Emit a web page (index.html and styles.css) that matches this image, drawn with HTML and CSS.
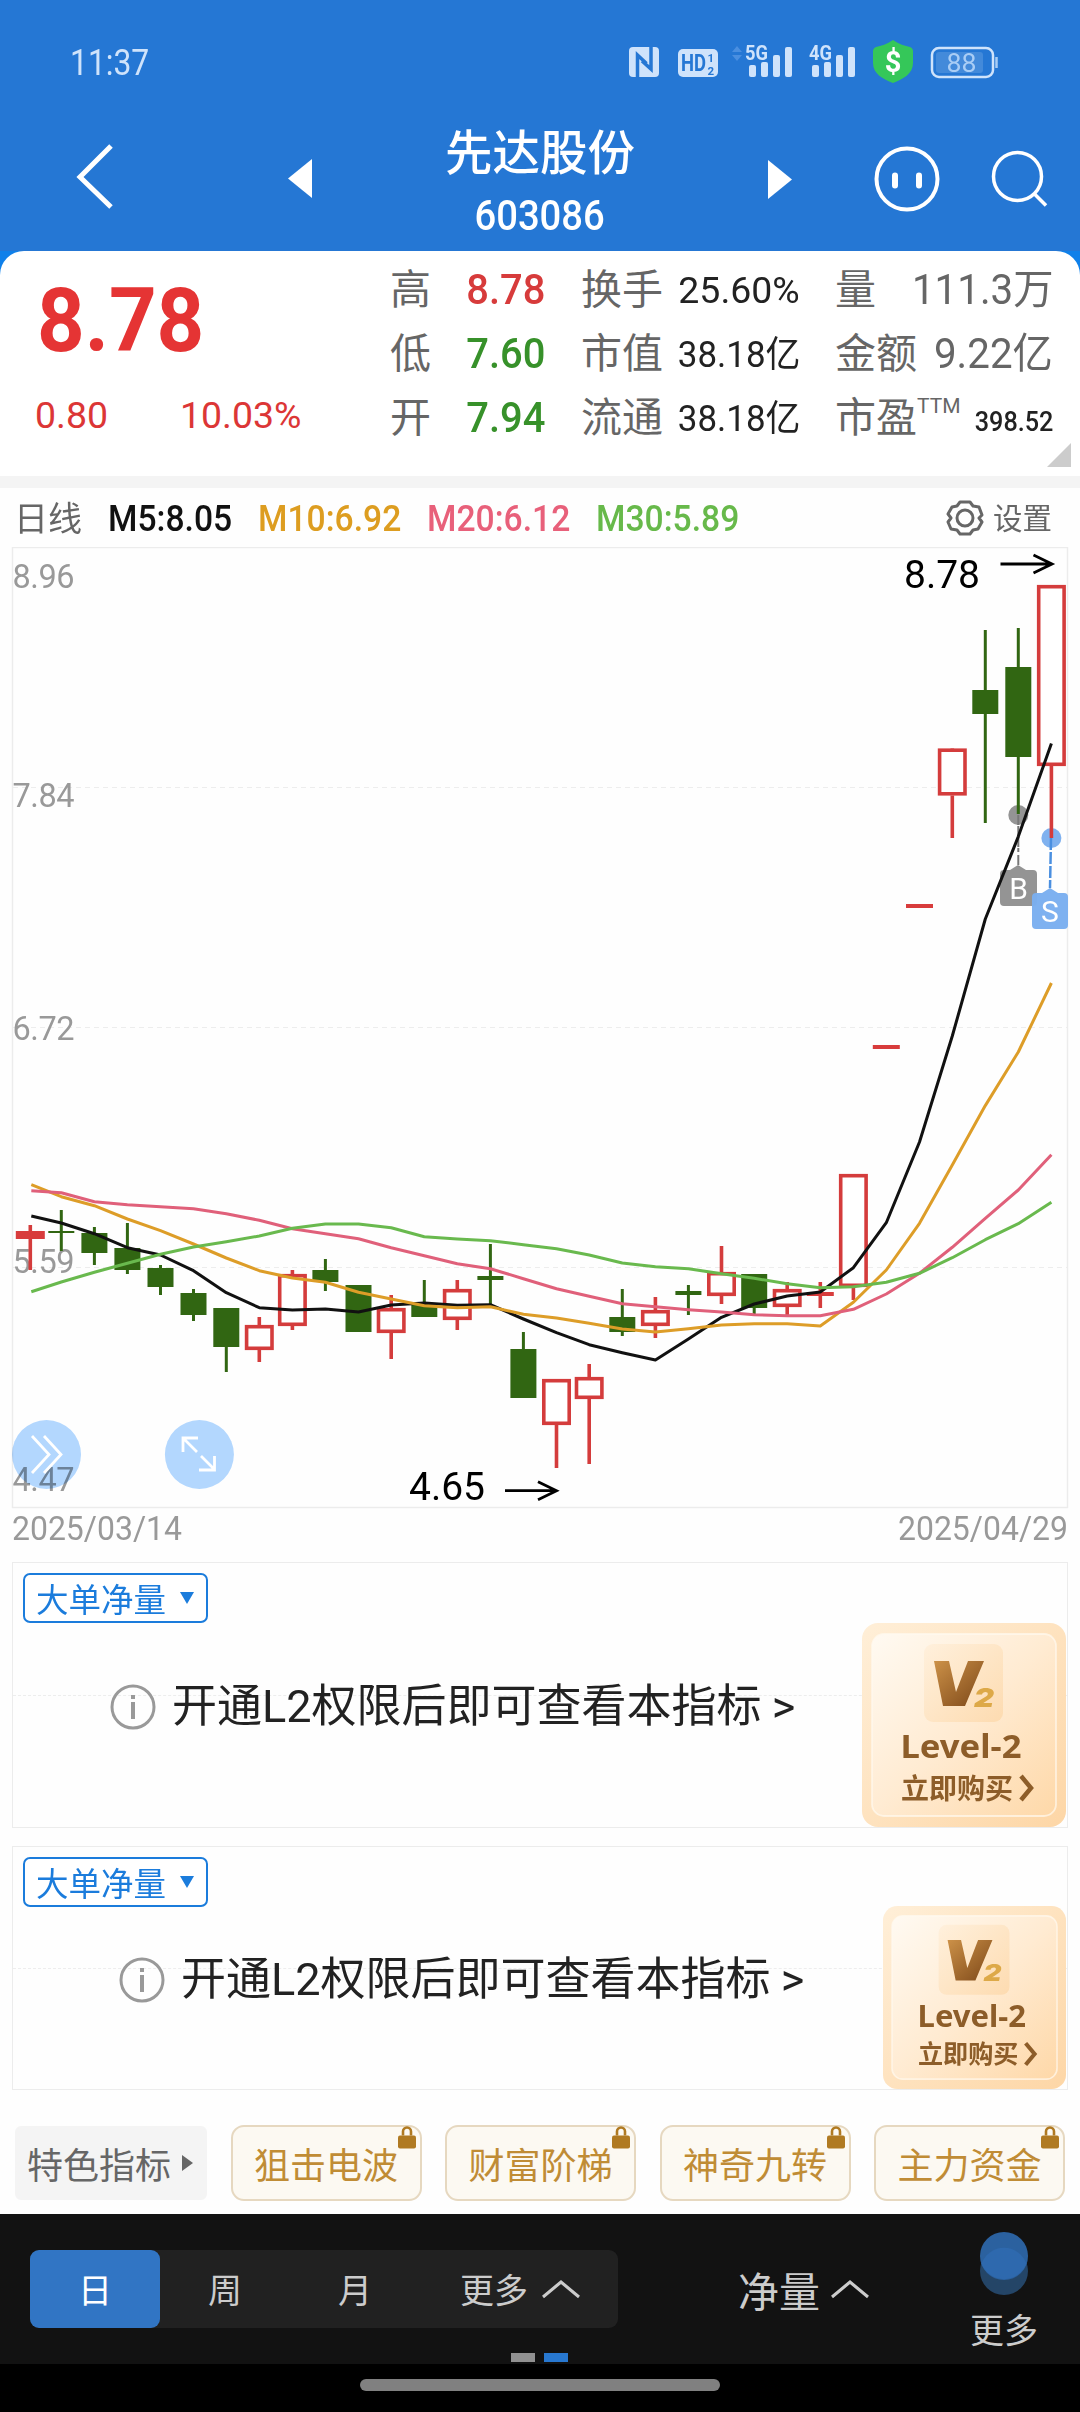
FILE: index.html
```html
<!DOCTYPE html>
<html lang="zh-CN">
<head>
<meta charset="utf-8">
<title>先达股份 603086</title>
<link rel="stylesheet" href="styles.css">
</head>
<body>
<div class="app">
  <header class="top">
    <div class="status">
      <span class="clock">11:37</span>
      <svg class="status-icons" width="376" height="50" viewBox="626 38 376 50">
        <rect x="629" y="47" width="30" height="30" rx="4" fill="#cfe3fb"/>
        <path d="M637.500 77V55l9 8.500M651 47v22l-9-8" fill="none" stroke="#2577d4" stroke-width="3.500"/>
        <rect x="678" y="49" width="40" height="28" rx="5" fill="#cfe3fb"/>
        <text x="681" y="71" class="hd" textLength="25" lengthAdjust="spacingAndGlyphs">HD</text>
        <text x="707.500" y="61.500" class="hd-s">1</text><text x="707.500" y="74.500" class="hd-s">2</text>
        <path d="M737 46l5 6h-10zM737 61l5-6h-10z" fill="#4a8fe0"/>
        <text x="745" y="60" class="net" textLength="23" lengthAdjust="spacingAndGlyphs">5G</text>
        <text x="809" y="60" class="net" textLength="23" lengthAdjust="spacingAndGlyphs">4G</text>
        <g fill="#cfe3fb">
          <rect x="749" y="65" width="7" height="12" rx="2"/><rect x="761" y="62" width="7" height="15" rx="2"/><rect x="773" y="55" width="7" height="22" rx="2"/><rect x="785" y="47" width="7" height="30" rx="2"/>
          <rect x="812" y="65" width="7" height="12" rx="2"/><rect x="824" y="62" width="7" height="15" rx="2"/><rect x="836" y="55" width="7" height="22" rx="2"/><rect x="848" y="47" width="7" height="30" rx="2"/>
        </g>
        <path d="M893 40c6 4 12 6 17 7 2 1 3 2 3 4v12c0 11-10 16-20 20-10-4-20-9-20-20V51c0-2 1-3 3-4 5-1 11-3 17-7z" fill="#35c759"/>
        <text x="893" y="72" class="dollar">$</text>
        <rect x="932" y="48" width="61" height="29" rx="7" fill="none" stroke="#cfe3fb" stroke-width="2.500"/>
        <rect x="936" y="52" width="47" height="21" rx="3" fill="#438ada"/>
        <path d="M996.500 57v11" stroke="#a9cdf5" stroke-width="2.500"/>
        <text x="946.500" y="72" class="batt" textLength="30" lengthAdjust="spacingAndGlyphs">88</text>
      </svg>
    </div>
    <nav class="titlebar">
      <svg class="ic" width="60" height="80" viewBox="65 137 60 80"><path d="M111 146L80 177l31 30" fill="none" stroke="#fff" stroke-width="5"/></svg>
      <svg class="ic" width="30" height="44" viewBox="285 157 30 44"><path d="M312 159v39l-24-19.500z" fill="#fff"/></svg>
      <div class="title"><h1>先达股份</h1><span class="code">603086</span></div>
      <svg class="ic" width="30" height="44" viewBox="765 157 30 44"><path d="M768 160v39l24-19.500z" fill="#fff"/></svg>
      <svg class="ic" width="180" height="80" viewBox="870 139 180 80" fill="none" stroke="#fff">
        <circle cx="907" cy="179" r="30.500" stroke-width="4"/>
        <path d="M895 175.500v10M919 175.500v10" stroke-width="6" stroke-linecap="round"/>
        <circle cx="1017.500" cy="176.500" r="24" stroke-width="3.500"/><path d="M1034 193.500l12 12" stroke-width="3.500"/>
      </svg>
    </nav>
  </header>

  <section class="quote-wrap"><div class="quote">
    <div class="price">
      <div class="last"><span>8.78</span></div>
      <div class="delta"><span>0.80</span><span>10.03%</span></div>
    </div>
    <dl class="stats s1">
      <dt>高</dt><dd class="up">8.78</dd>
      <dt>低</dt><dd class="down">7.60</dd>
      <dt>开</dt><dd class="down">7.94</dd>
    </dl>
    <dl class="stats s2">
      <dt>换手</dt><dd class="rate">25.60%</dd>
      <dt>市值</dt><dd>38.18亿</dd>
      <dt>流通</dt><dd>38.18亿</dd>
    </dl>
    <dl class="stats s3">
      <dt>量</dt><dd>111.3万</dd>
      <dt>金额</dt><dd>9.22亿</dd>
      <dt>市盈<sup>TTM</sup></dt><dd class="pe">398.52</dd>
    </dl>
    <i class="fold"></i>
  </div></section>

  <div class="ma-row">
    <span class="period">日线</span>
    <span class="ma m5">M5:8.05</span><span class="ma m10">M10:6.92</span><span class="ma m20">M20:6.12</span><span class="ma m30">M30:5.89</span>
    <svg class="gear" width="38" height="38" viewBox="-19 -19 38 38" fill="none" stroke="#666" stroke-width="3" stroke-linejoin="round">
      <path d="M-5-16H5L8-12 14-11 17-3 14 0 17 4 13 11 8 12 5 16H-5L-8 12-14 11-17 4-14 0-17-4-13-11-8-12z"/><circle r="8"/>
    </svg>
    <span class="set">设置</span>
  </div>

  <svg class="chart" width="1080" height="1015" viewBox="0 547 1080 1015">
    <rect x="12.500" y="547.500" width="1055" height="960" fill="none" stroke="#ececec" stroke-width="1.400"/>
    <path d="M13 787.500H1067M13 1027.500H1067M13 1267.500H1067" stroke="#ededed" stroke-width="1.200" stroke-dasharray="5 4"/>
    <g class="axis">
      <text x="12.500" y="588" textLength="62">8.96</text>
      <text x="12.500" y="806.500" textLength="62">7.84</text>
      <text x="12.500" y="1040" textLength="62">6.72</text>
      <text x="12.500" y="1273" textLength="62">5.59</text>
      <text x="12.500" y="1491" textLength="62">4.47</text>
      <text x="12" y="1540" textLength="170" lengthAdjust="spacingAndGlyphs">2025/03/14</text>
      <text x="898" y="1540" textLength="170" lengthAdjust="spacingAndGlyphs">2025/04/29</text>
    </g>
    <g class="marks">
      <circle cx="1018.300" cy="815" r="10" fill="#949494"/>
      <path d="M1018.300 815v37M1018.300 855v12" stroke="#777" stroke-width="2" stroke-dasharray="10 1"/>
      <circle cx="1051.400" cy="838" r="10" fill="#7fb1ef"/>
      <path d="M1051 838l-1 50" stroke="#4a8fe0" stroke-width="2.500" stroke-dasharray="12 2"/>
    </g>
    <g id="candles"></g>
    <g class="marks">
      <path d="M1004 870h6l8-5 8 5h7q4 0 4 4v28q0 4-4 4h-29q-4 0-4-4v-28q0-4 4-4z" fill="#8c8c8c" fill-opacity=".93"/>
      <path d="M1036 893h6l8-5 8 5h6q4 0 4 4v28q0 4-4 4h-28q-4 0-4-4v-28q0-4 4-4z" fill="#7aaef0" fill-opacity=".97"/>
      <text x="1018.500" y="899">B</text><text x="1050" y="922">S</text>
    </g>
    <g id="averages"></g>
    <g class="extreme">
      <text x="904" y="587.500" textLength="76">8.78</text>
      <path d="M1000.500 564H1052M1033.500 555l18.500 9-18.500 9"/>
      <text x="409" y="1500" textLength="76">4.65</text>
      <path d="M505 1490.700h51.500M538 1481.700l18.500 9-18.500 9"/>
    </g>
    <g class="overlay-buttons">
      <circle cx="46.500" cy="1454.500" r="34.500"/>
      <circle cx="199.400" cy="1454.500" r="34.500"/>
      <path d="M32 1436l17 18.500-17 18.500M44 1436l17 18.500-17 18.500"/>
      <path d="M198 1438h-15v14M183 1438l14 14M201 1456l14 14M199 1470h15.500v-14"/>
    </g>
  </svg>

  <section class="indicator first">
    <button class="pick">大单净量<i></i></button>
    <div class="notice"><svg width="46" height="46" viewBox="-23 -23 46 46"><circle r="21" fill="none" stroke="#999" stroke-width="3"/><path d="M0-5v17M0-12v4" stroke="#999" stroke-width="4"/></svg><span>开通L2权限后即可查看本指标 <b>&gt;</b></span></div>
    <svg class="card" viewBox="0 0 204 204">
      <defs>
        <linearGradient id="edge" x1="0" y1="0" x2="1" y2="1"><stop offset="0" stop-color="#ffefd8"/><stop offset="1" stop-color="#fdd6a6"/></linearGradient>
        <linearGradient id="face" x1="0" y1="0" x2="1" y2="1"><stop offset="0" stop-color="#fffaf2"/><stop offset=".5" stop-color="#ffebd2"/><stop offset="1" stop-color="#fed8a8"/></linearGradient>
        <linearGradient id="tile" x1="0" y1="0" x2="1" y2="1"><stop offset="0" stop-color="#fff0dc"/><stop offset="1" stop-color="#fddbb0"/></linearGradient>
        <linearGradient id="vee" x1="0" y1="0" x2="1" y2="1"><stop offset="0" stop-color="#cc9148"/><stop offset="1" stop-color="#7c4718"/></linearGradient>
      </defs>
      <g id="level2">
        <rect width="204" height="204" rx="16" fill="url(#edge)"/>
        <rect x="10" y="11" width="184" height="182" rx="12" fill="url(#face)" stroke="#fffaf0" stroke-opacity=".7" stroke-width="1.800"/>
        <rect x="62" y="21" width="79" height="78" rx="9" fill="url(#tile)"/>
        <path d="M72 38h15l7 31 12-31h16L103 83H81z" fill="url(#vee)"/>
        <text x="112" y="83.500" class="two" textLength="20" lengthAdjust="spacingAndGlyphs">2</text>
        <text x="38.500" y="135" class="lv" textLength="121" lengthAdjust="spacingAndGlyphs">Level-2</text>
        <text x="39" y="175.500" class="buy">立即购买</text>
        <path d="M159 153l10 12-10 12" fill="none" stroke="#8d5d29" stroke-width="4.500"/>
      </g>
    </svg>
  </section>

  <section class="indicator second">
    <button class="pick">大单净量<i></i></button>
    <div class="notice"><svg width="46" height="46" viewBox="-23 -23 46 46"><circle r="21" fill="none" stroke="#999" stroke-width="3"/><path d="M0-5v17M0-12v4" stroke="#999" stroke-width="4"/></svg><span>开通L2权限后即可查看本指标 <b>&gt;</b></span></div>
    <svg class="card" viewBox="0 0 204 204"><use href="#level2"/></svg>
  </section>

  <div class="tags">
    <span class="tag plain">特色指标<i></i></span>
    <span class="tag">狙击电波<svg class="lock" viewBox="0 0 18 23"><path d="M5 10V6a4 4 0 018 0v4" fill="none" stroke="#b07a22" stroke-width="2.600"/><rect y="10" width="18" height="13" rx="2" fill="#b07a22"/></svg></span>
    <span class="tag">财富阶梯<svg class="lock" viewBox="0 0 18 23"><path d="M5 10V6a4 4 0 018 0v4" fill="none" stroke="#b07a22" stroke-width="2.600"/><rect y="10" width="18" height="13" rx="2" fill="#b07a22"/></svg></span>
    <span class="tag">神奇九转<svg class="lock" viewBox="0 0 18 23"><path d="M5 10V6a4 4 0 018 0v4" fill="none" stroke="#b07a22" stroke-width="2.600"/><rect y="10" width="18" height="13" rx="2" fill="#b07a22"/></svg></span>
    <span class="tag">主力资金<svg class="lock" viewBox="0 0 18 23"><path d="M5 10V6a4 4 0 018 0v4" fill="none" stroke="#b07a22" stroke-width="2.600"/><rect y="10" width="18" height="13" rx="2" fill="#b07a22"/></svg></span>
  </div>

  <footer class="toolbar">
    <div class="periods">
      <span class="on">日</span><span>周</span><span>月</span>
      <span class="more">更多<svg width="40" height="20" viewBox="0 0 40 20"><path d="M2 18L20 3l18 15" fill="none" stroke="#ccc" stroke-width="3"/></svg></span>
    </div>
    <span class="net-vol">净量<svg width="40" height="20" viewBox="0 0 40 20"><path d="M2 18L20 3l18 15" fill="none" stroke="#ccc" stroke-width="3"/></svg></span>
    <div class="extra">
      <svg width="50" height="64" viewBox="0 0 50 64"><circle cx="25" cy="39" r="24" fill="#244567"/><circle cx="25" cy="24" r="24" fill="#2b619f"/><path d="M2.500 31.500a24 24 0 0145 0 24 24 0 01-45 0z" fill="#2e69ae"/></svg>
      <span>更多</span>
    </div>
    <div class="pager"><i></i><i class="cur"></i></div>
  </footer>
  <div class="home"><i></i></div>
</div>
<script src="chart.js"></script>
</body>
</html>
```
FILE: styles.css
```css
* { box-sizing: border-box; margin: 0; padding: 0; }
body { width: 1080px; background: #fefefe; font-family: Roboto, "Noto Sans CJK SC", sans-serif; color: #222; }
.app { width: 1080px; height: 2412px; display: flex; flex-direction: column; overflow: hidden; }
.app > * { flex: none; }
svg { display: block; }

.top { height: 251px; background: #2577d4; color: #fff; }
.status { height: 98px; display: flex; justify-content: space-between; align-items: flex-start; padding: 38px 78px 0 70px; }
.clock { font-size: 37px; line-height: 50px; color: #cfe3fb; transform: scaleX(.86); transform-origin: left; }
.status-icons text { font-family: Roboto, sans-serif; fill: #cfe3fb; }
.status-icons .hd { font-size: 23px; font-weight: 700; fill: #2577d4; }
.status-icons .hd-s { font-size: 11.500px; font-weight: 700; fill: #2577d4; }
.status-icons .net { font-size: 21px; font-weight: 700; }
.status-icons .dollar { font-size: 29px; font-weight: 700; fill: #fff; text-anchor: middle; }
.status-icons .batt { font-size: 26px; fill: #a9cdf5; }

.titlebar { display: flex; height: 153px; padding-left: 65px; }
.ic { margin-top: 39px; }
.ic:nth-of-type(1) { margin-right: 160px; }
.ic:nth-of-type(2), .ic:nth-of-type(3) { margin-top: 59px; }
.ic:nth-of-type(4) { margin-left: 75px; margin-top: 41px; }
.title { width: 450px; display: flex; flex-direction: column; align-items: center; }
.title h1 { font-size: 47.500px; font-weight: 500; line-height: 54px; margin-top: 25px; font-family: "Noto Sans CJK SC", sans-serif; }
.code { font-size: 42px; line-height: 50px; margin-top: 14px; font-weight: 500; transform: scaleX(.91); }

.quote-wrap { background: #0f80ea; height: 225px; }
.quote { position: relative; height: 225px; background: #fff; border-radius: 24px 24px 0 0; display: flex; padding-top: 7px; }
.price { width: 390px; padding-left: 37px; color: #e53434; }
.last { font-size: 89px; font-weight: 700; line-height: 110px; margin-top: 8px; }
.last span { display: inline-block; transform: scaleX(.935); transform-origin: left; }
.delta { display: flex; font-size: 36px; line-height: 50px; margin-top: 15px; margin-left: -2px; color: #dc3636; }
.delta span { width: 145px; transform: scaleX(1.04); transform-origin: left; }
.stats { display: grid; grid-template-rows: repeat(3, 64px); line-height: 64px; align-items: center; }
.stats dt { font-size: 41px; color: #666; white-space: nowrap; }
.stats dd { justify-self: end; transform-origin: right; white-space: nowrap; }
.s1 { width: 156px; grid-template-columns: 60px minmax(0, 1fr); }
.s1 dd { font-size: 42px; font-weight: 500; transform: scaleX(.95); padding-right: 1px; }
.up { color: #d73b3b; }
.down { color: #37912a; }
.s2 { width: 219px; margin-left: 35px; grid-template-columns: 88px minmax(0, 1fr); }
.s2 dd { font-size: 36px; padding-top: 2px; transform: scaleX(.97); }
.s2 .rate { transform: scaleX(1.04); }
.s3 { width: 218px; margin-left: 35px; grid-template-columns: 88px minmax(0, 1fr); }
.s3 dd { font-size: 42px; color: #666; transform: scaleX(.96); }
.s3 .pe { font-size: 28px; color: #222; font-weight: 500; padding-top: 8px; transform: scaleX(.9); }
.s3 sup { font-size: 21px; line-height: 0; vertical-align: 19px; }
.fold { position: absolute; right: 9px; bottom: 9px; width: 24px; height: 24px; background: #ccc; clip-path: polygon(100% 0, 100% 100%, 0 100%); }

.ma-row { height: 71px; border-top: 12px solid #f4f4f4; display: grid; grid-template-columns: 94px 150px 169px 169px 350px 48px 1fr; align-items: center; padding: 3px 0 0 14px; font-size: 34px; line-height: 56px; }
.period { color: #666; }
.ma { font-weight: 500; font-size: 36px; transform: scaleX(.935); transform-origin: left; justify-self: start; }
.m5 { color: #111; }
.m10 { color: #dd9d20; }
.m20 { color: #e8607a; }
.m30 { color: #67b94a; }
.gear { margin-top: -2px; }
.set { font-size: 29.500px; color: #666; margin-left: -1px; }

.chart text { font-family: Roboto, sans-serif; }
.axis text { font-size: 32.500px; fill: #999; }
.extreme text { font-size: 39px; fill: #000; }
.extreme path { fill: none; stroke: #000; stroke-width: 2.800; }
.marks text { font-size: 30px; fill: #fff; text-anchor: middle; }
#averages polyline { fill: none; stroke-width: 3; stroke-linejoin: round; }
.overlay-buttons circle { fill: #b4d8ff; mix-blend-mode: multiply; }
.overlay-buttons path { fill: none; stroke: #fff; stroke-width: 2.800; }

.indicator { position: relative; margin: 0 12px; border: 1.500px solid #ececec; padding: 10px 0 0 10px; }
.first { height: 266px; }
.second { height: 244px; margin-top: 18px; }
.indicator::before { content: ""; position: absolute; left: 0; right: 0; top: 50%; border-top: 1px dashed #ededed; }
.pick { position: relative; display: flex; align-items: center; width: 185px; height: 50px; border: 2px solid #1b7cdc; border-radius: 7px; background: #fff; color: #1b7cdc; padding-left: 11px; font: 32.500px/44px "Noto Sans CJK SC", sans-serif; }
.pick i { margin-left: 14px; border: 7.500px solid transparent; border-top: 12px solid #1b7cdc; border-bottom: 0; }
.notice { position: relative; display: flex; align-items: center; gap: 16px; width: 720px; font-size: 45px; line-height: 60px; white-space: nowrap; }
.notice b { font-weight: 400; margin-left: -1px; }
.first .notice { margin: 54px 0 0 87px; }
.second .notice { margin: 43px 0 0 96px; }
.card { position: absolute; right: 0; }
.first .card { width: 204px; height: 204px; right: 1px; bottom: 0; }
.second .card { width: 183px; height: 183px; right: 1px; bottom: 0; }
#level2 text { font-family: "Noto Sans", sans-serif; font-weight: 700; fill: #8d5d29; }
#level2 .lv { font-size: 33px; }
#level2 .buy { font-size: 28px; font-family: "Noto Sans CJK SC", sans-serif; }
#level2 .two { font-size: 26px; font-family: Inter, sans-serif; font-weight: 900; font-style: italic; fill: #dda948; }

.tags { display: grid; grid-template-columns: 192px repeat(4, 191px); column-gap: 23.500px; height: 124px; padding: 35px 0 0 15px; }
.tag { position: relative; height: 76px; border: 2px solid #e6d8c0; border-radius: 13px; background: #fcf9f2; color: #c08c35; font-size: 36px; line-height: 73px; text-align: center; font-family: "Noto Sans CJK SC", sans-serif; }
.plain { display: flex; align-items: center; height: 74px; margin-top: 1px; padding-left: 10px; border-color: #f4f4f4; background: #f4f4f4; border-radius: 6px; color: #666; }
.plain i { margin-left: 11px; border: 8px solid transparent; border-left: 11px solid #666; border-right: 0; }
.lock { position: absolute; right: 4px; top: -2px; width: 18px; height: 24px; }

.toolbar { position: relative; height: 150px; background: #121212; color: #ccc; display: flex; padding-left: 30px; font-family: "Noto Sans CJK SC", sans-serif; }
.periods { width: 588px; height: 78px; margin-top: 36px; border-radius: 9px; background: #212121; display: grid; grid-template-columns: 130px 130px 130px 1fr; font-size: 34px; line-height: 78px; text-align: center; }
.periods .on { background: #3175c4; color: #fff; border-radius: 9px; }
.more, .net-vol { display: flex; align-items: center; gap: 13px; }
.more { padding-left: 40px; }
.net-vol { height: 78px; margin: 36px 0 0 120px; font-size: 41px; gap: 10px; width: 212px; }
.extra { display: flex; flex-direction: column; align-items: center; width: 88px; padding-top: 18px; font-size: 34px; line-height: 50px; margin-left: 10px; }
.extra span { margin-top: 8px; }
.pager { position: absolute; left: 511px; bottom: 2px; display: flex; gap: 9px; }
.pager i { width: 24px; height: 9px; background: #919191; }
.pager .cur { background: #2878d0; }
.home { height: 48px; background: #000; display: flex; justify-content: center; padding-top: 15px; }
.home i { width: 360px; height: 12px; border-radius: 6px; background: #808080; }
```
FILE: chart.js
```js
const xs = [30.3, 61.3, 94.4, 127.4, 160.5, 193.5, 226.3, 259.3, 292.4, 325.4, 358.5, 391.2, 424.3, 457.3, 490.4, 523.4,
  556.5, 589.2, 622.3, 655.4, 688.4, 721.5, 754.2, 787.2, 820.3, 853.4, 886.3, 919.5, 952.3, 985.3, 1018.3, 1051.4];

// direction, body top, body bottom, wick top, wick bottom
const candles = [
  ['r', 1231, 1239, 1225, 1270], ['g', 1231, 1233, 1210, 1251], ['g', 1233, 1253, 1227, 1265], ['g', 1248, 1270, 1223, 1274],
  ['g', 1268, 1287, 1265, 1295], ['g', 1293, 1315, 1289, 1321], ['g', 1308, 1347, 1308, 1372], ['r', 1325, 1350, 1317, 1362],
  ['r', 1274, 1326, 1270, 1330], ['g', 1270, 1282, 1259, 1291], ['g', 1285, 1332, 1285, 1332], ['r', 1308, 1333, 1295, 1359],
  ['g', 1303, 1317, 1280, 1317], ['r', 1289, 1320, 1280, 1330], ['g', 1276, 1280, 1244, 1304], ['g', 1349, 1398, 1332, 1398],
  ['r', 1379, 1425, 1379, 1468], ['r', 1377, 1399, 1364, 1464], ['g', 1317, 1332, 1289, 1336], ['r', 1310, 1326, 1297, 1338],
  ['g', 1291, 1295, 1285, 1315], ['r', 1272, 1296, 1246, 1304], ['g', 1274, 1308, 1274, 1314], ['r', 1289, 1307, 1282, 1315],
  ['r', 1292, 1296, 1282, 1308], ['r', 1174, 1287, 1174, 1300], ['r', 1045, 1049, 1045, 1049], ['r', 904, 908, 904, 908],
  ['r', 748.5, 795.5, 749, 838], ['g', 690, 714, 630, 823], ['g', 667, 757, 628, 814], ['r', 585, 766, 585, 838]
];

const averages = {
  '#111111': [1216, 1223, 1233.7, 1247.7, 1255, 1270.7, 1292.7, 1307.7, 1310, 1309, 1312, 1305, 1303, 1305.3, 1304.7, 1319, 1332.7, 1344.7, 1352.7, 1360, 1339, 1317.3, 1304, 1296, 1292, 1267.7, 1222.7, 1142, 1036, 919, 836.6, 743.6],
  '#dd9d28': [1184.7, 1196.7, 1205.7, 1219, 1230.7, 1244, 1258, 1270.7, 1278, 1282.3, 1292.3, 1299, 1305.7, 1307.7, 1306.7, 1314.3, 1318, 1323.3, 1329, 1332, 1328.7, 1325, 1323.7, 1323.7, 1326, 1302.3, 1270, 1223.3, 1165, 1105.6, 1052, 983],
  '#e0607a': [1190.7, 1192.7, 1201.7, 1204.7, 1206.7, 1208.7, 1213.7, 1220.3, 1228.7, 1233.7, 1238.7, 1247.7, 1255.7, 1263.7, 1268.7, 1278.7, 1288.7, 1296.3, 1303.7, 1306.7, 1309.7, 1312, 1314.7, 1315.7, 1315.7, 1309.3, 1294, 1273.3, 1247.3, 1218.3, 1190, 1154.7],
  '#69b94e': [1291.7, 1282, 1272.3, 1263.3, 1254.3, 1247, 1241.7, 1236, 1228.3, 1224, 1224, 1227.7, 1236.7, 1239, 1240.7, 1244.7, 1248.7, 1255, 1263, 1266.7, 1268.7, 1273.7, 1278.3, 1283.7, 1287.7, 1286.7, 1282.3, 1273.3, 1257.7, 1239.7, 1223.7, 1202.3]
};

let out = '';
candles.forEach(([dir, top, bottom, high, low], i) => {
  const x = xs[i];
  if (dir === 'g') {
    out += `<path d="M${x} ${high}V${low}" stroke="#316612" stroke-width="3"/>`;
    out += `<rect x="${x - 13}" y="${top}" width="26" height="${bottom - top}" fill="#316612"/>`;
    return;
  }
  out += `<path d="M${x} ${high}V${top}M${x} ${bottom}V${low}" stroke="#d43c3c" stroke-width="3.6"/>`;
  if (bottom - top < 10) {
    const half = bottom - top > 5 ? 14.5 : 13.5;
    out += `<rect x="${x - half}" y="${top}" width="${half * 2}" height="${bottom - top}" fill="#d83c3c"/>`;
  } else {
    out += `<rect x="${x - 12.7}" y="${top + 1.7}" width="25.4" height="${bottom - top - 3.4}" fill="#fff" stroke="#d43c3c" stroke-width="3.6"/>`;
  }
});
document.getElementById('candles').innerHTML = out;

document.getElementById('averages').innerHTML = Object.entries(averages).map(([color, ys]) =>
  `<polyline stroke="${color}" points="${ys.map((y, i) => (i ? xs[i] : 31.3) + ',' + y).join(' ')}"/>`).join('');
```
